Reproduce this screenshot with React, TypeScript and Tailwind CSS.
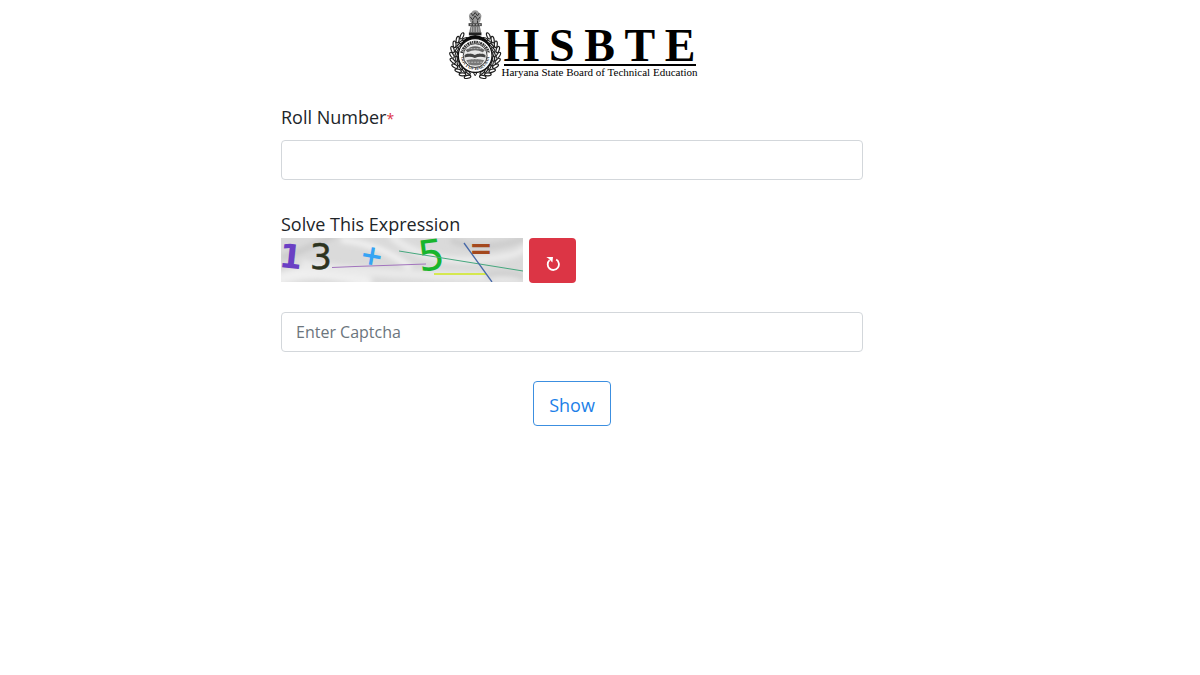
import { useId } from "react";

const leaves = Array.from({ length: 10 }, (_, i) => 20 + i * 14);

const Emblem = () => {
    const ringId = useId();

    return (
        <svg viewBox="0 0 160 210" className="w-[53px] h-[70px] shrink-0" role="img" aria-label="Haryana emblem">
            <defs>
                <path id={ringId} d="M36 140a43 43 0 0 0 86 0" />
            </defs>
            {/* wreath */}
            {[1, -1].map((side) => (
                <g key={side} transform={side === 1 ? undefined : "translate(158 0) scale(-1 1)"}>
                    <path d="M79 201A63 63 0 0 0 28 100" fill="none" stroke="#222" strokeWidth="3" transform="translate(158 0) scale(-1 1)" />
                    {leaves.map((angle) => (
                        <g key={angle} transform={`rotate(${180 - angle} 79 138)`} fill="#fff" stroke="#1c1c1c" strokeWidth="3.5">
                            <ellipse cx="80" cy="68" rx="10" ry="4.5" transform="rotate(32 80 68)" />
                            <ellipse cx="77" cy="81" rx="8" ry="3" transform="rotate(-18 77 81)" />
                        </g>
                    ))}
                </g>
            ))}
            <path d="M34 110Q48 80 79 78Q110 80 124 110L110 124H48z" fill="#0a0a0a" />
            <circle cx="79" cy="140" r="51" fill="#fff" stroke="#111" strokeWidth="4" />
            <path d="M38 132a42 42 0 0 1 82 0" fill="none" stroke="#333" strokeWidth="8" strokeDasharray="5 2 3 2 6 2" />
            <text fontSize="13" fontWeight="700" fill="#222" fontFamily="Liberation Serif, serif">
                <textPath href={`#${ringId}`} startOffset="50%" textAnchor="middle">GOVT OF HARYANA</textPath>
            </text>
            <circle cx="79" cy="140" r="36" fill="#e8e8e8" stroke="#222" strokeWidth="2.5" />
            <path d="M50 124q29 -24 58 0l-6 6q-23 -12 -46 0z" fill="#666" />
            <path d="M47 138q14 -8 31 0q17 -8 32 0v8q-16 -6 -32 1q-16 -7 -31 -1z" fill="#444" />
            <path d="M52 154q27 -8 54 0l-8 13q-19 6 -38 0z" fill="#777" />
            <path d="M56 119h46M49 133h60M52 150h54M58 160h42" stroke="#ddd" strokeWidth="2" strokeDasharray="6 3" />
            {/* lion capital */}
            <path d="M60 20q1 -8 8 -10q3 -7 11 -7t11 7q7 2 8 10l-2 12q-1 7 -6 10H68q-5 -3 -6 -10z" fill="#999" />
            <path d="M67 12l5 8 7 -10 7 10 5 -8M64 23l7 9 8 -12 8 12 7 -9M72 34v8M86 34v8" fill="none" stroke="#333" strokeWidth="3" />
            <path d="M59 42h40v9H59z" fill="#444" />
            <path d="M64 47h31" stroke="#ddd" strokeWidth="3" strokeDasharray="4 5" />
            <path d="M65 51h28l4 19H61z" fill="#777" />
            <path d="M68 54v15M75 54v15M83 54v15M90 54v15" stroke="#ccc" strokeWidth="2" />
            <path d="M60 70h38v9H60z" fill="#222" />
        </svg>
    );
};

const Captcha = () => {
    const shadeId = useId();

    return (
        <svg viewBox="0 0 242 44" className="w-[242px] h-11" role="img" aria-label="13 + 5 =">
            <defs>
                <filter id={shadeId} x="-10%" y="-50%" width="120%" height="200%">
                    <feGaussianBlur stdDeviation="2.5" />
                </filter>
            </defs>
            <rect width="242" height="44" fill="#dadada" />
            <g filter={`url(#${shadeId})`} fill="none">
                <path d="M-5 42Q40 26 90 46" stroke="#efefef" strokeWidth="12" />
                <path d="M20 26Q90 38 250 40" stroke="#e9e9e9" strokeWidth="9" />
                <path d="M60 2Q100 6 130 30" stroke="#f0f0f0" strokeWidth="6" />
                <path d="M110 -2Q140 24 190 22T245 8" stroke="#ebebeb" strokeWidth="7" />
                <path d="M0 20Q35 8 55 -4" stroke="#cbcbcb" strokeWidth="6" />
                <path d="M170 2Q200 16 245 0" stroke="#cccccc" strokeWidth="6" />
                <path d="M205 38Q225 32 245 40" stroke="#cfcfcf" strokeWidth="6" />
            </g>
            <g fontFamily="DejaVu Sans, sans-serif" textAnchor="middle">
                <text x="10" y="30" fontSize="33" fontWeight="700" fill="#6a3fc4" transform="rotate(6 10 18)">1</text>
                <text x="40" y="31" fontSize="35" fill="#2c331f" stroke="#2c331f" strokeWidth="0.4">3</text>
                <text x="91" y="27" fontSize="28" fontWeight="700" fill="#36a4f4" transform="rotate(10 91 17)">+</text>
                <text x="150" y="32" fontSize="42" fill="#18b52c" transform="rotate(-7 150 16)">5</text>
                <text x="200" y="20" fontSize="28" fontWeight="700" fill="#a4491f">=</text>
            </g>
            <g fill="none">
                <path d="M51 29.5L74 28.5L145 26" stroke="#a274bd" />
                <path d="M118 13L242 33" stroke="#45a77d" />
                <path d="M153 36H205" stroke="#cfe81e" strokeWidth="1.5" />
                <path d="M183 5L211 44" stroke="#4668a8" strokeWidth="1.3" />
            </g>
        </svg>
    );
};

export default function App() {
    const inputStyle = "block w-full h-10 px-[14px] rounded border border-[#d3d7db] bg-white text-base text-[#495057] placeholder:text-[#6c757d] focus:outline-none focus:border-[#80bdff]";

    return (
        <main className="min-h-screen bg-white pr-14 font-['Open_Sans',sans-serif] text-lg leading-7 text-[#212529]">
            <form className="mx-auto w-full max-w-[582px] pt-[9px]" onSubmit={(e) => e.preventDefault()}>
                <header className="flex h-[70px] justify-center font-['Liberation_Serif',serif] text-black">
                    <Emblem />
                    <div className="ml-0.5 w-48 pt-[13px]">
                        <h1 className="flex h-11 justify-between border-b-2 border-black text-[46px] leading-[48px] font-bold">
                            {["H", "S", "B", "T", "E"].map((letter) => (
                                <span key={letter}>{letter}</span>
                            ))}
                        </h1>
                        <p className="flex justify-center text-[11px] leading-3 whitespace-nowrap">Haryana State Board of Technical Education</p>
                    </div>
                </header>

                <div className="mt-6">
                    <label htmlFor="roll" className="mb-[9px] block">
                        Roll Number<span className="text-sm text-[#dc3545]">*</span>
                    </label>
                    <input id="roll" type="text" className={inputStyle} />
                </div>

                <div className="mt-[30px]">
                    <label htmlFor="captcha" className="block">Solve This Expression</label>
                    <div className="flex gap-1.5">
                        <Captcha />
                        <button type="button" aria-label="Refresh captcha" className="flex h-[45px] w-[47px] items-center justify-center rounded bg-[#dc3545] pt-1 text-white">
                            <svg viewBox="0 0 16 16" className="size-4" fill="none" stroke="currentColor" strokeWidth="1.8">
                                <path d="M11.2 4.6A5.6 5.6 0 1 1 4.6 5.2" />
                                <path d="M1.3 2H8L7.4 7.6L5.2 5.2L3.8 3.8z" fill="currentColor" stroke="none" />
                            </svg>
                        </button>
                    </div>
                    <input id="captcha" type="text" placeholder="Enter Captcha" className={`mt-[29px] ${inputStyle}`} />
                </div>

                <div className="mt-[29px] flex justify-center">
                    <button type="submit" className="h-[45px] rounded border border-[#3c8fe0] px-[15px] pt-0.5 text-[#1c7fe8]">Show</button>
                </div>
            </form>
        </main>
    );
}
